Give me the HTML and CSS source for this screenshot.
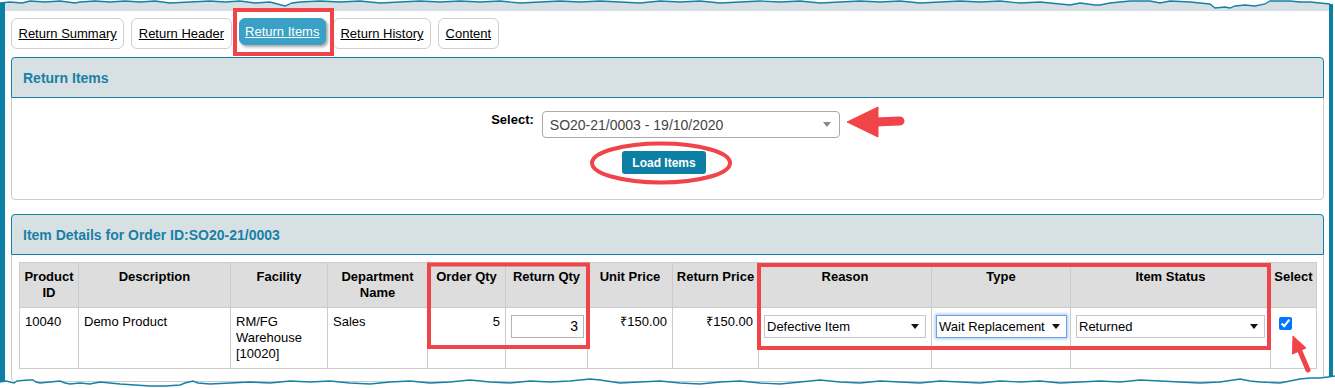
FILE: index.html
```html
<!DOCTYPE html>
<html lang="en">
<head>
<meta charset="utf-8">
<title>Return Items</title>
<link rel="stylesheet" href="styles.css">
</head>
<body>
<div class="frame">
  <svg class="edge-top" width="1335" height="11" viewBox="0 0 1335 11">
    <polygon fill="#d6dfe4" points="0,3 10,2 22,3 30,1 45,2 60,1 75,3 80,2 95,1 110,2 125,1 140,2 155,1 170,3 190,2 210,1 225,2 240,1 255,3 270,2 285,6 292,3 300,2 320,1 340,2 360,1 380,3 400,2 420,1 440,2 460,1 480,2 500,1 520,3 540,2 560,1 580,2 600,1 620,2 640,3 660,1 680,2 700,1 720,3 740,2 760,1 780,2 800,1 820,3 840,2 860,1 880,2 900,1 920,3 940,2 960,1 980,2 1000,1 1020,3 1040,2 1060,4 1070,5 1080,3 1095,5 1100,5 1110,3 1130,1 1150,1 1160,3 1170,1 1190,2 1200,3 1210,4 1215,8 1225,7 1230,8 1235,6 1245,5 1255,6 1265,4 1270,1 1290,1 1300,2 1310,2 1320,3 1330,4 1330,11 0,11"/>
    <polyline fill="none" stroke="#1581a6" stroke-width="1.3" points="0,3 10,2 22,3 30,1 45,2 60,1 75,3 80,2 95,1 110,2 125,1 140,2 155,1 170,3 190,2 210,1 225,2 240,1 255,3 270,2 285,6 292,3 300,2 320,1 340,2 360,1 380,3 400,2 420,1 440,2 460,1 480,2 500,1 520,3 540,2 560,1 580,2 600,1 620,2 640,3 660,1 680,2 700,1 720,3 740,2 760,1 780,2 800,1 820,3 840,2 860,1 880,2 900,1 920,3 940,2 960,1 980,2 1000,1 1020,3 1040,2 1060,4 1070,5 1080,3 1095,5 1100,5 1110,3 1130,1 1150,1 1160,3 1170,1 1190,2 1200,3 1210,4 1215,8 1225,7 1230,8 1235,6 1245,5 1255,6 1265,4 1270,1 1290,1 1300,2 1310,2 1320,3 1330,4"/>
    <rect x="0" y="3" width="5" height="8" fill="#0b7fa5"/>
    <rect x="1329" y="4" width="4" height="7" fill="#0b7fa5"/>
  </svg>

  <div class="page">
    <nav class="tabs">
      <a class="tab">Return Summary</a>
      <a class="tab">Return Header</a>
      <a class="tab tab-active">Return Items</a>
      <a class="tab">Return History</a>
      <a class="tab">Content</a>
    </nav>

    <section class="panel">
      <div class="panel-head">Return Items</div>
      <div class="panel-body load-body">
        <div class="select-row">
          <span class="select-label">Select:</span>
          <div class="order-select">
            <span>SO20-21/0003 - 19/10/2020</span>
            <span class="caret caret-gray"></span>
          </div>
        </div>
        <button class="load-btn" type="button">Load Items</button>
      </div>
    </section>

    <section class="panel panel-items">
      <div class="panel-head">Item Details for Order ID:SO20-21/0003</div>
      <div class="panel-body items-body">
        <table class="items">
          <colgroup>
            <col class="c-id"><col class="c-desc"><col class="c-fac"><col class="c-dept">
            <col class="c-oqty"><col class="c-rqty"><col class="c-up"><col class="c-rp">
            <col class="c-reason"><col class="c-type"><col class="c-status"><col class="c-sel">
          </colgroup>
          <thead>
            <tr>
              <th>Product ID</th>
              <th>Description</th>
              <th>Facility</th>
              <th>Department Name</th>
              <th class="nowrap">Order Qty</th>
              <th class="nowrap">Return Qty</th>
              <th class="nowrap">Unit Price</th>
              <th class="nowrap">Return Price</th>
              <th>Reason</th>
              <th>Type</th>
              <th>Item Status</th>
              <th>Select</th>
            </tr>
          </thead>
          <tbody>
            <tr>
              <td>10040</td>
              <td>Demo Product</td>
              <td>RM/FG Warehouse [10020]</td>
              <td>Sales</td>
              <td class="num">5</td>
              <td><div class="qty-input">3</div></td>
              <td class="num">₹150.00</td>
              <td class="num">₹150.00</td>
              <td><div class="cell-select"><span>Defective Item</span><span class="caret"></span></div></td>
              <td><div class="cell-select focused"><span>Wait Replacement</span><span class="caret"></span></div></td>
              <td><div class="cell-select"><span>Returned</span><span class="caret"></span></div></td>
              <td><input class="check" type="checkbox" checked></td>
            </tr>
          </tbody>
        </table>
      </div>
    </section>
  </div>

  <svg class="overlay" width="1335" height="388" viewBox="0 0 1335 388">
    <polygon fill="#ffffff" points="0,382 6,381 10,382 14,383 17,381 28,380 33,380 36,382 40,383 50,382 60,381 65,383 70,384 80,383 90,384 100,382 110,383 120,384 135,385 150,386 165,386 180,385 185,383 193,381 198,383 210,384 230,383 250,382 270,383 290,381 310,382 330,381 350,383 370,384 390,382 410,381 430,383 450,382 470,380 490,382 510,383 530,381 550,382 570,381 590,379 600,380 620,383 640,382 660,381 680,383 700,384 720,382 740,381 760,383 780,384 800,382 820,380 840,382 860,383 880,381 900,382 920,383 940,381 960,382 980,383 1000,381 1020,382 1040,381 1060,383 1080,382 1100,381 1120,382 1140,380 1160,381 1180,382 1200,383 1220,382 1240,379 1250,381 1260,382 1280,383 1290,381 1300,379 1310,378 1320,378 1328,377 1335,376 1335,388 0,388"/>
    <polyline fill="none" stroke="#1581a6" stroke-width="1.4" points="0,382 6,381 10,382 14,383 17,381 28,380 33,380 36,382 40,383 50,382 60,381 65,383 70,384 80,383 90,384 100,382 110,383 120,384 135,385 150,386 165,386 180,385 185,383 193,381 198,383 210,384 230,383 250,382 270,383 290,381 310,382 330,381 350,383 370,384 390,382 410,381 430,383 450,382 470,380 490,382 510,383 530,381 550,382 570,381 590,379 600,380 620,383 640,382 660,381 680,383 700,384 720,382 740,381 760,383 780,384 800,382 820,380 840,382 860,383 880,381 900,382 920,383 940,381 960,382 980,383 1000,381 1020,382 1040,381 1060,383 1080,382 1100,381 1120,382 1140,380 1160,381 1180,382 1200,383 1220,382 1240,379 1250,381 1260,382 1280,383 1290,381 1300,379 1310,378 1320,378 1328,377 1335,376"/>
    <g fill="none" stroke="#f04448" stroke-width="4">
      <rect x="235" y="10" width="97" height="44"/>
      <rect x="429" y="264.5" width="159" height="82.5"/>
      <rect x="759" y="265" width="510" height="83"/>
      <ellipse cx="661" cy="163" rx="69" ry="19.5"/>
    </g>
    <g fill="#f04448" stroke="#f04448">
      <polygon points="847,122 878,107 878,137" stroke-width="1" stroke-linejoin="round"/>
      <line x1="874" y1="122" x2="900" y2="121" stroke-width="9" stroke-linecap="round"/>
      <polygon points="1293,336 1306,348 1292.5,354" stroke-width="1" stroke-linejoin="round"/>
      <line x1="1299" y1="349" x2="1308" y2="370" stroke-width="5" stroke-linecap="round"/>
    </g>
  </svg>
</div>
</body>
</html>
```

FILE: styles.css
```css
* {
  box-sizing: border-box;
}

html, body {
  margin: 0;
  padding: 0;
  background: #ffffff;
}

body {
  font-family: "Liberation Sans", Arial, sans-serif;
  font-size: 13px;
  color: #000;
}

.frame {
  position: relative;
  width: 1335px;
  height: 388px;
  overflow: hidden;
  background: #ffffff;
}

.edge-top {
  display: block;
}

.page {
  height: 377px;
  margin-right: 2px;
  border-left: 5px solid #0b7fa5;
  border-right: 4px solid #0b7fa5;
  padding: 7px 5px 0 6px;
  overflow: hidden;
}

/* Tabs */
.tabs {
  display: flex;
  align-items: flex-start;
  gap: 7px;
}

.tab {
  height: 31px;
  display: flex;
  align-items: center;
  padding: 0 6.5px;
  border: 1px solid #cfcfcf;
  border-radius: 6px;
  background: #fff;
  color: #000;
  text-decoration: underline;
  font-size: 13px;
  white-space: nowrap;
}

.tab-active {
  height: 27px;
  padding: 0 5.5px;
  background: #3aa0c6;
  border-color: #3aa0c6;
  color: #fff;
  box-shadow: 2px 2px 3px rgba(0, 0, 0, 0.35);
}

/* Panels */
.panel {
  margin-top: 8px;
  border: 1px solid #cccccc;
  border-radius: 4px;
  background: #fff;
}

.panel-items {
  margin-top: 14px;
}

.panel-head {
  margin: -1px -1px 0;
  border: 1px solid #1581a6;
  border-radius: 4px 4px 0 0;
  background: #d7e1e4;
  color: #1a7fa6;
  font-weight: bold;
  font-size: 14px;
  line-height: 17px;
  padding: 12px 11px 10px;
}

.load-body {
  display: flex;
  flex-direction: column;
  align-items: center;
  padding: 13px 0 25px;
  gap: 13px;
}

.select-row {
  display: flex;
  align-items: flex-start;
  gap: 8px;
  margin-left: -4px;
}

.select-label {
  font-weight: bold;
  font-size: 13px;
  padding-top: 1px;
}

.order-select {
  width: 298px;
  height: 27px;
  border: 1px solid #aaaaaa;
  border-radius: 4px;
  display: flex;
  align-items: center;
  justify-content: space-between;
  padding: 0 8px 0 7px;
  color: #444;
  font-size: 14px;
}

.caret {
  width: 0;
  height: 0;
  border-left: 4px solid transparent;
  border-right: 4px solid transparent;
  border-top: 5px solid #111;
}

.caret-gray {
  border-top-color: #888;
}

.load-btn {
  height: 23px;
  width: 84px;
  margin-left: -7px;
  padding: 0;
  border: none;
  border-radius: 3px;
  background: #0e7fa4;
  color: #fff;
  font-family: "Liberation Sans", Arial, sans-serif;
  font-weight: bold;
  font-size: 12px;
}

/* Items table */
.items-body {
  padding: 7px 7px 12px;
}

.items {
  width: 1297px;
  table-layout: fixed;
  border-collapse: collapse;
}

.c-id { width: 59px; }
.c-desc { width: 152px; }
.c-fac { width: 97px; }
.c-dept { width: 100px; }
.c-oqty { width: 78px; }
.c-rqty { width: 82px; }
.c-up { width: 85px; }
.c-rp { width: 86px; }
.c-reason { width: 173px; }
.c-type { width: 139px; }
.c-status { width: 200px; }
.c-sel { width: 46px; }

.items th,
.items td {
  border: 1px solid #cccccc;
  vertical-align: top;
  font-size: 13px;
  line-height: 16px;
}

.items th {
  background: #dddddd;
  font-weight: bold;
  text-align: center;
  padding: 6px 2px 6px;
}

.items th.nowrap {
  white-space: nowrap;
}

.items td {
  padding: 6px 5px;
  text-align: left;
}

.items td.num {
  text-align: right;
}

.qty-input {
  width: 73px;
  height: 23px;
  border: 1px solid #b5b5b5;
  padding: 0 5px;
  text-align: right;
  line-height: 21px;
  font-size: 14px;
  margin-top: 1px;
}

.cell-select {
  width: 100%;
  height: 23px;
  border: 1px solid #c6c6c6;
  background: #fff;
  display: flex;
  align-items: center;
  justify-content: space-between;
  padding: 0 6px 0 2px;
  font-size: 13px;
  white-space: nowrap;
  margin-top: 1px;
}

.cell-select.focused {
  border-color: #6aa4e4;
  box-shadow: 0 0 3px 1px rgba(90, 150, 230, 0.55);
  margin-left: -1px;
  width: calc(100% + 3px);
}

.check {
  width: 13px;
  height: 13px;
  margin: 3px 0 0 3px;
  accent-color: #0075ff;
}

.overlay {
  position: absolute;
  left: 0;
  top: 0;
  pointer-events: none;
}
```
